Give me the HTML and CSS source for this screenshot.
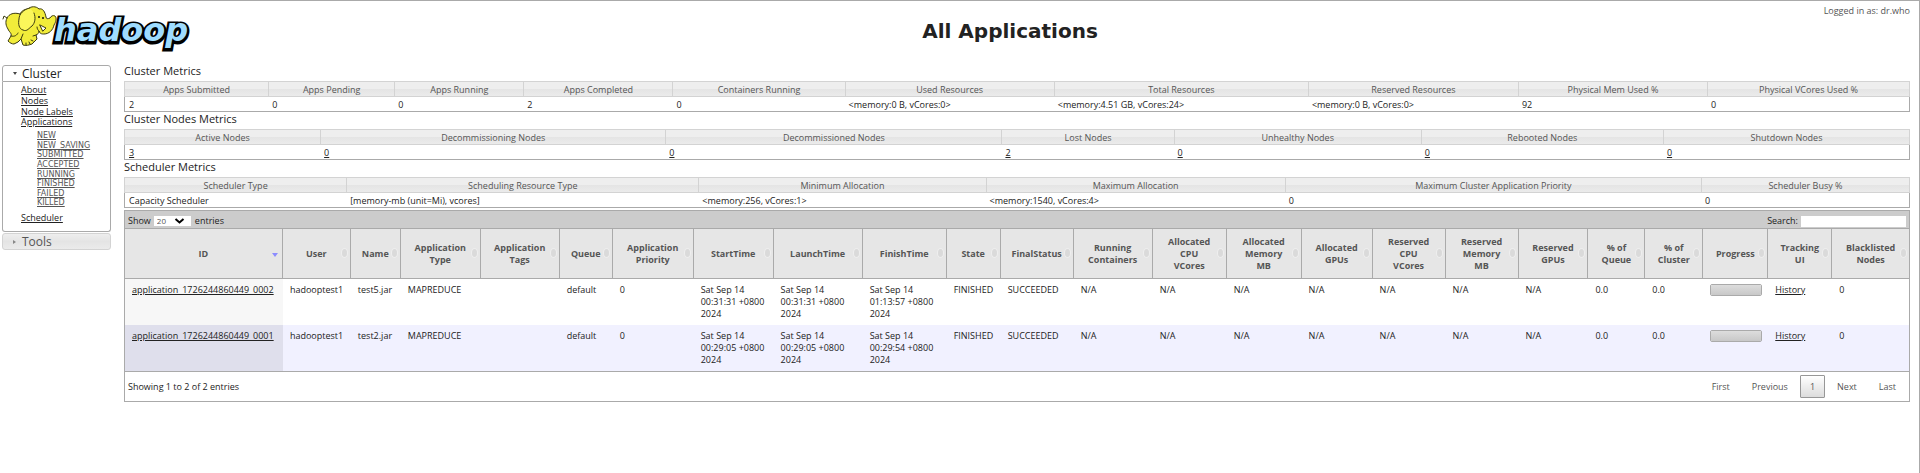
FILE: index.html
```
<!DOCTYPE html>
<html lang="en">
<head>
<meta charset="utf-8">
<title>All Applications</title>
<link rel="stylesheet" href="styles.css">
</head>
<body>
<header class="top">
  <svg class="logo" viewBox="0 0 192 46" role="img" aria-label="hadoop">
    <text class="logo-shadow" x="52" y="36">hadoop</text>
    <text class="logo-word" x="52" y="35">hadoop</text>
    <g stroke="#3a3a10" stroke-width="1" stroke-linejoin="round" stroke-linecap="round">
      <path fill="#f1ec3a" d="M18 8 C12 6 7 8 5 12 C3 16 4 20 6 23 C7 26 10 27 9 30 L6 35 C8 37 10 38 12 38 L16 36 L19 33 L21 39 C24 40 27 39 30 38 L35 33 L34 29 C36 28 37 27 37 25 C38 28 40 28 42 28 C47 28 51 24 52 19 C54 16 55 12 53 10 C51 9 49 10 48 12 C46 13 44 13 44 11 C43 6 41 2 37 3 C34 0 29 0 26 3 C23 3 19 5 18 8 Z"/>
      <path fill="#faf65a" d="M28 2 C22 3 17 8 17 13 C16 18 17 23 21 24 C25 26 27 22 30 20 C33 17 34 12 32 7"/>
      <path fill="none" d="M37 25 C36 24 35 23 35 21 M19 33 L21 28 M34 29 L31 30 M9 30 C13 31 15 29 16 27 M5 12 L2 10 L1 13 M24 39 L24 37 M28 38 L27 36 M31 35 L29 34"/>
      <path fill="#fff" d="M38 19 L44 22 L41 25 Z"/>
    </g>
    <g fill="#111"><circle cx="37" cy="11" r="1"/><circle cx="41" cy="12" r="1"/></g>
  </svg>
  <h1>All Applications</h1>
  <p class="user">Logged in as: dr.who</p>
</header>
<div class="layout">
<nav class="side">
  <h2 class="tab open"><button type="button"><i class="tri down"></i>Cluster</button></h2>
  <div class="panel">
    <ul class="links">
      <li><a href="#">About</a></li>
      <li><a href="#">Nodes</a></li>
      <li><a href="#">Node Labels</a></li>
      <li><a href="#">Applications</a>
        <ul class="states">
          <li><a href="#">NEW</a></li><li><a href="#">NEW_SAVING</a></li><li><a href="#">SUBMITTED</a></li><li><a href="#">ACCEPTED</a></li><li><a href="#">RUNNING</a></li><li><a href="#">FINISHED</a></li><li><a href="#">FAILED</a></li><li><a href="#">KILLED</a></li>
        </ul>
      </li>
      <li><a href="#">Scheduler</a></li>
    </ul>
  </div>
  <h2 class="tab"><button type="button"><i class="tri right"></i>Tools</button></h2>
</nav>
<main>
  <h3>Cluster Metrics</h3>
  <table class="metrics cluster">
    <thead><tr><th>Apps Submitted</th><th>Apps Pending</th><th>Apps Running</th><th>Apps Completed</th><th>Containers Running</th><th>Used Resources</th><th>Total Resources</th><th>Reserved Resources</th><th>Physical Mem Used %</th><th>Physical VCores Used %</th></tr></thead>
    <tbody><tr><td>2</td><td>0</td><td>0</td><td>2</td><td>0</td><td>&lt;memory:0 B, vCores:0&gt;</td><td>&lt;memory:4.51 GB, vCores:24&gt;</td><td>&lt;memory:0 B, vCores:0&gt;</td><td>92</td><td>0</td></tr></tbody>
  </table>
  <h3>Cluster Nodes Metrics</h3>
  <table class="metrics nodes">
    <thead><tr><th>Active Nodes</th><th>Decommissioning Nodes</th><th>Decommissioned Nodes</th><th>Lost Nodes</th><th>Unhealthy Nodes</th><th>Rebooted Nodes</th><th>Shutdown Nodes</th></tr></thead>
    <tbody><tr><td><a href="#">3</a></td><td><a href="#">0</a></td><td><a href="#">0</a></td><td><a href="#">2</a></td><td><a href="#">0</a></td><td><a href="#">0</a></td><td><a href="#">0</a></td></tr></tbody>
  </table>
  <h3>Scheduler Metrics</h3>
  <table class="metrics scheduler">
    <thead><tr><th>Scheduler Type</th><th>Scheduling Resource Type</th><th>Minimum Allocation</th><th>Maximum Allocation</th><th>Maximum Cluster Application Priority</th><th>Scheduler Busy %</th></tr></thead>
    <tbody><tr><td>Capacity Scheduler</td><td>[memory-mb (unit=Mi), vcores]</td><td>&lt;memory:256, vCores:1&gt;</td><td>&lt;memory:1540, vCores:4&gt;</td><td>0</td><td>0</td></tr></tbody>
  </table>
  <section class="apps">
    <div class="toolbar">
      <label>Show <span class="pick"><select><option>20</option><option>40</option></select><svg viewBox="0 0 10 6"><path d="M1 1 L5 4.500 L9 1" fill="none" stroke="#000" stroke-width="2"/></svg></span> entries</label>
      <label>Search: <input type="search"></label>
    </div>
    <table class="grid">
      <thead><tr>
        <th class="sorted">ID</th><th>User</th><th>Name</th><th>Application<br>Type</th><th>Application<br>Tags</th><th>Queue</th><th>Application<br>Priority</th><th>StartTime</th><th>LaunchTime</th><th>FinishTime</th><th>State</th><th>FinalStatus</th><th>Running<br>Containers</th><th>Allocated<br>CPU<br>VCores</th><th>Allocated<br>Memory<br>MB</th><th>Allocated<br>GPUs</th><th>Reserved<br>CPU<br>VCores</th><th>Reserved<br>Memory<br>MB</th><th>Reserved<br>GPUs</th><th>% of<br>Queue</th><th>% of<br>Cluster</th><th>Progress</th><th>Tracking<br>UI</th><th>Blacklisted<br>Nodes</th>
      </tr></thead>
      <tbody>
        <tr><td><a href="#">application_1726244860449_0002</a></td><td>hadooptest1</td><td>test5.jar</td><td>MAPREDUCE</td><td></td><td>default</td><td>0</td><td>Sat Sep 14<br>00:31:31 +0800<br>2024</td><td>Sat Sep 14<br>00:31:31 +0800<br>2024</td><td>Sat Sep 14<br>01:13:57 +0800<br>2024</td><td>FINISHED</td><td>SUCCEEDED</td><td>N/A</td><td>N/A</td><td>N/A</td><td>N/A</td><td>N/A</td><td>N/A</td><td>N/A</td><td>0.0</td><td>0.0</td><td><progress value="0" max="100" aria-label="Progress"></progress></td><td><a href="#">History</a></td><td>0</td></tr>
        <tr><td><a href="#">application_1726244860449_0001</a></td><td>hadooptest1</td><td>test2.jar</td><td>MAPREDUCE</td><td></td><td>default</td><td>0</td><td>Sat Sep 14<br>00:29:05 +0800<br>2024</td><td>Sat Sep 14<br>00:29:05 +0800<br>2024</td><td>Sat Sep 14<br>00:29:54 +0800<br>2024</td><td>FINISHED</td><td>SUCCEEDED</td><td>N/A</td><td>N/A</td><td>N/A</td><td>N/A</td><td>N/A</td><td>N/A</td><td>N/A</td><td>0.0</td><td>0.0</td><td><progress value="0" max="100" aria-label="Progress"></progress></td><td><a href="#">History</a></td><td>0</td></tr>
      </tbody>
    </table>
    <div class="foot">
      <span>Showing 1 to 2 of 2 entries</span>
      <div class="pages"><button type="button">First</button><button type="button">Previous</button><button type="button" class="current">1</button><button type="button">Next</button><button type="button">Last</button></div>
    </div>
  </section>
</main>
</div>
</body>
</html>
```
FILE: styles.css
```
* { box-sizing: border-box; }
body {
  margin: 0;
  min-height: 100vh;
  padding: 0 9px 0 2px;
  border-top: 1px solid #aaa;
  border-right: 1px solid #aaa;
  background: #fff;
  color: #222;
  font: 9px/12px "Open Sans", "Noto Sans", sans-serif;
}
a { color: #222; text-underline-offset: 1px; }
h1, h2, h3, p, ul { margin: 0; padding: 0; font-weight: normal; }
ul { list-style: none; }
button, input, select { font: inherit; color: inherit; }

.top {
  display: grid;
  grid-template-columns: 1fr auto 1fr;
  height: 63px;
}
.logo { width: 192px; height: 46px; margin-top: 5px; }
.logo text { font: italic bold 32px "DejaVu Sans", sans-serif; stroke-linejoin: miter; }
.logo-shadow { fill: #000; stroke: #000; stroke-width: 5px; }
.logo-word { fill: #9edcff; }
.top h1 { padding: 18px 0 0 108px; font: bold 20px/24px "DejaVu Sans", sans-serif; }
.user { padding-top: 4px; justify-self: end; color: #555; }

.layout { display: flex; gap: 13px; align-items: flex-start; }
.side { width: 109px; flex: none; padding-top: 1px; }
.tab { font-size: 12px; line-height: 15px; }
.tab button {
  display: flex;
  align-items: center;
  gap: 5px;
  width: 100%;
  height: 17px;
  padding: 0 10px;
  border: 1px solid #d3d3d3;
  border-radius: 3px;
  background: linear-gradient(#eee, #e4e4e4 50%, #ebebeb);
  color: #555;
}
.tab.open button { border-color: #aaa; border-radius: 3px 3px 0 0; background: #fff; color: #222; }
.tri { border: 2px solid transparent; }
.tri.down { border-width: 3px 2px 0; border-top-color: #444; }
.tri.right { border-width: 2px 0 2px 3px; border-left-color: #888; margin-right: 1px; }
.panel {
  height: 150px;
  margin-bottom: 1px;
  padding: 3px 0 0 18px;
  border: 1px solid #aaa;
  border-top: 0;
  border-radius: 0 0 3px 3px;
}
.links { line-height: 1.2; }
.states { padding: 3px 0 5px 16px; font: 8px/1.2 "DejaVu Sans", sans-serif; }
.states a { color: #555; }

main { flex: 1; min-width: 0; }
h3 { height: 17px; font-size: 11px; line-height: 14px; }
table { width: 100%; table-layout: fixed; border-collapse: separate; border-spacing: 0; }
.metrics th {
  height: 16px;
  padding: 2px 0 0;
  border: solid #d3d3d3;
  border-width: 1px 0 1px 1px;
  background: linear-gradient(#eee 50%, #e4e4e4 50%, #ebebeb);
  color: #555;
  font-weight: normal;
}
.metrics th:last-child { border-right-width: 1px; }
.metrics td { height: 15px; padding: 2px 4px 0; border-bottom: 1px solid #aaa; white-space: nowrap; }
.metrics td:first-child { border-left: 1px solid #aaa; }
.metrics td:last-child { border-right: 1px solid #aaa; }

.cluster th:nth-child(1) { width: 8.07%; }
.cluster th:nth-child(2) { width: 7.06%; }
.cluster th:nth-child(3) { width: 7.23%; }
.cluster th:nth-child(4) { width: 8.35%; }
.cluster th:nth-child(5) { width: 9.64%; }
.cluster th:nth-child(6) { width: 11.71%; }
.cluster th:nth-child(7) { width: 14.23%; }
.cluster th:nth-child(8) { width: 11.76%; }
.cluster th:nth-child(9) { width: 10.59%; }
.nodes th:nth-child(1) { width: 10.98%; }
.nodes th:nth-child(2) { width: 19.33%; }
.nodes th:nth-child(3) { width: 18.82%; }
.nodes th:nth-child(4) { width: 9.64%; }
.nodes th:nth-child(5) { width: 13.84%; }
.nodes th:nth-child(6) { width: 13.56%; }
.scheduler th:nth-child(1) { width: 12.44%; }
.scheduler th:nth-child(2) { width: 19.72%; }
.scheduler th:nth-child(3) { width: 16.08%; }
.scheduler th:nth-child(4) { width: 16.75%; }
.scheduler th:nth-child(5) { width: 23.31%; }

.apps { margin-top: 2px; border: 1px solid #aaa; }
.toolbar {
  display: flex;
  justify-content: space-between;
  padding: 4px 3px 1px;
  background: #ccc;
}
.toolbar label { display: flex; align-items: center; gap: 3px; height: 12px; }
.pick { position: relative; display: flex; margin-right: 1px; }
.pick select {
  appearance: none;
  width: 37px;
  height: 10px;
  padding: 0 3px;
  border: 0;
  border-radius: 0;
  background: #fff;
  color: #555;
  font-size: 8px;
  line-height: 10px;
}
.pick svg { position: absolute; right: 6px; top: 2px; width: 11px; height: 6px; pointer-events: none; }
.toolbar input { width: 105px; height: 11px; padding: 0 2px; border: 0; background: #fff; }

.grid th {
  position: relative;
  height: 51px;
  padding: 0;
  border: solid #aaa;
  border-width: 1px 1px 1px 0;
  background: #e6e6e6;
  color: #555;
  font-weight: bold;
}
.grid th:last-child { border-right: 0; }
.grid th::after {
  content: "";
  position: absolute;
  right: 3px;
  top: 50%;
  width: 5px;
  height: 8px;
  margin-top: -5px;
  border-radius: 50%;
  background: #dadada;
  box-shadow: 0 0 0 1px #eee;
}
.grid th.sorted::after {
  right: 4px;
  width: 0;
  height: 0;
  margin-top: -1px;
  border: 3px solid transparent;
  border-top: 4px solid #8c8cff;
  border-bottom: 0;
  border-radius: 0;
  background: none;
  box-shadow: none;
}
.grid td { padding: 5px 0 5px 7px; vertical-align: top; white-space: nowrap; }
.grid tr:nth-child(odd) td:first-child { background: #f7f7f7; }
.grid tr:nth-child(even) td { background: #f1f1ff; }
.grid tr:nth-child(even) td:first-child { background: #dfdfec; }
progress {
  appearance: none;
  display: block;
  width: 52px;
  height: 12px;
  border: 1px solid #aaa;
  border-radius: 2px;
  overflow: hidden;
}
progress::-webkit-progress-bar { background: linear-gradient(#ddd, #c8c8c8); }
.grid th:nth-child(1) { width: 8.85%; }
.grid th:nth-child(2) { width: 3.81%; }
.grid th:nth-child(3) { width: 2.8%; }
.grid th:nth-child(4) { width: 4.48%; }
.grid th:nth-child(5) { width: 4.43%; }
.grid th:nth-child(6) { width: 2.97%; }
.grid th:nth-child(7) { width: 4.54%; }
.grid th:nth-child(8) { width: 4.48%; }
.grid th:nth-child(9) { width: 4.99%; }
.grid th:nth-child(10) { width: 4.71%; }
.grid th:nth-child(11) { width: 3.03%; }
.grid th:nth-child(12) { width: 4.09%; }
.grid th:nth-child(13) { width: 4.43%; }
.grid th:nth-child(14) { width: 4.15%; }
.grid th:nth-child(15) { width: 4.2%; }
.grid th:nth-child(16) { width: 3.98%; }
.grid th:nth-child(17) { width: 4.09%; }
.grid th:nth-child(18) { width: 4.09%; }
.grid th:nth-child(19) { width: 3.92%; }
.grid th:nth-child(20) { width: 3.19%; }
.grid th:nth-child(21) { width: 3.25%; }
.grid th:nth-child(22) { width: 3.64%; }
.grid th:nth-child(23) { width: 3.59%; }

.foot {
  display: flex;
  justify-content: space-between;
  align-items: center;
  padding: 3px 3px 3px 3px;
  border-top: 1px solid #aaa;
}
.pages { display: flex; gap: 2px; }
.pages button {
  height: 23px;
  padding: 0 9px;
  border: 1px solid transparent;
  border-radius: 1px;
  background: none;
  color: #555;
}
.pages .current { border-color: #979797; background: linear-gradient(#fff, #dcdcdc); }
```
